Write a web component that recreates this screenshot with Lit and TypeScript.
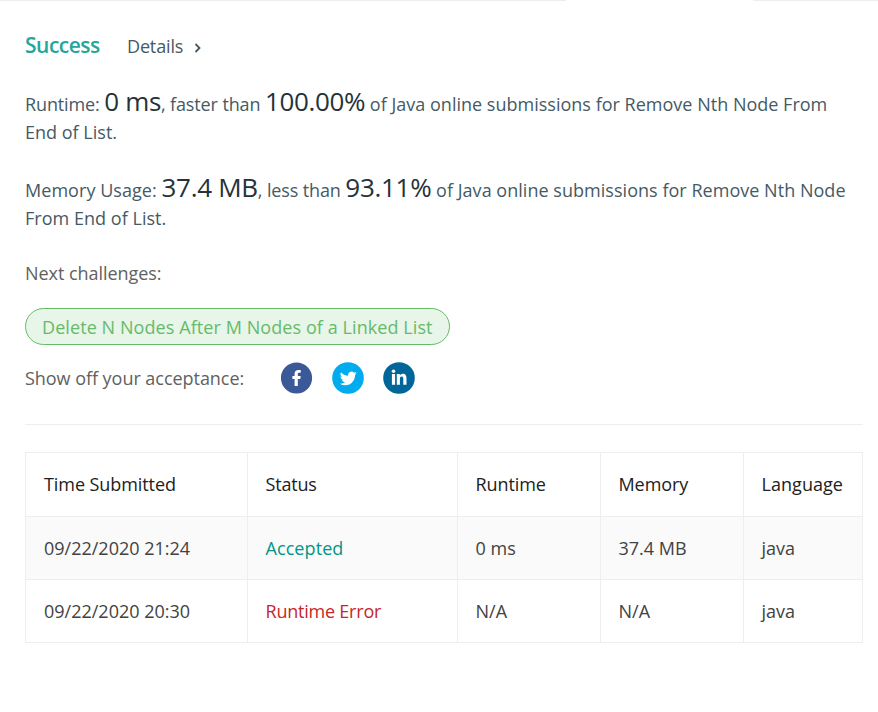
import { LitElement, html, css } from "lit";
import { customElement } from "lit/decorators.js";

interface Submission {
  time: string;
  status: string;
  ok: boolean;
  runtime: string;
  memory: string;
  language: string;
}

const submissions: Submission[] = [
  { time: "09/22/2020 21:24", status: "Accepted", ok: true, runtime: "0 ms", memory: "37.4 MB", language: "java" },
  { time: "09/22/2020 20:30", status: "Runtime Error", ok: false, runtime: "N/A", memory: "N/A", language: "java" },
];

@customElement("app-root")
class AppRoot extends LitElement {
  static styles = css`
    :host {
      display: block;
      box-sizing: border-box;
      height: 712px;
      overflow: hidden;
      background: #fff;
      color: #455a64;
      font: 18px/28px "Open Sans", "Noto Sans", sans-serif;
      white-space: nowrap;
    }
    .tabs { display: flex; justify-content: space-between; height: 1px; }
    .tabs i { background: #eee; }
    .left { width: 566px; }
    .right { width: 125px; }
    .page { padding: 30px 15px 0 25px; }
    .head { display: flex; align-items: baseline; height: 28px; }
    .success { color: #26a69a; font-size: 21px; font-weight: 600; letter-spacing: -0.5px; width: 102px; }
    .details { letter-spacing: -0.15px; }
    .chevron { margin-left: 11px; width: 8px; height: 10px; }
    p { margin: 31px 0 0; height: 56px; }
    p + p { margin-top: 30px; }
    b { font-weight: 400; font-size: 26px; line-height: 0; color: #263238; letter-spacing: -0.35px; }
    .memory b { letter-spacing: -0.3px; }
    .t1 { letter-spacing: -0.12px; }
    .memory .t1:first-child { letter-spacing: 0.05px; }
    .t2 { letter-spacing: 0.01px; }
    .memory .t2 { letter-spacing: 0.03px; }
    .next { margin-top: 27px; color: #616161; letter-spacing: -0.05px; }
    .pill {
      box-sizing: border-box;
      width: 425px;
      height: 37px;
      margin: 21px 0 17px;
      padding-left: 16px;
      border: 1px solid #66bb6a;
      border-radius: 19px;
      background: #e8f5e9;
      color: #66bb6a;
      line-height: 36px;
      letter-spacing: 0.08px;
    }
    .share { display: flex; align-items: center; height: 32px; color: #616161; letter-spacing: -0.04px; }
    .share span { width: 256px; }
    .share svg { width: 32px; height: 32px; margin-right: 19px; }
    .rule { height: 1px; margin: 30px 0 27px; background: #eee; width: 838px; }
    table { border-collapse: collapse; table-layout: fixed; width: 838px; color: #424242; }
    th, td { box-sizing: border-box; border: 1px solid #eee; padding: 0 0 0 17.5px; text-align: left; font-weight: 400; height: 63px; }
    th { height: 64px; padding-bottom: 2px; color: #212121; letter-spacing: -0.08px; }
    th:first-child, td:first-child { padding-left: 18px; }
    th:nth-child(2) { letter-spacing: -0.2px; }
    th:last-child { letter-spacing: 0.05px; }
    .shade { background: #fafafa; }
    .good { color: #009688; letter-spacing: 0.08px; }
    .bad { color: #c62828; letter-spacing: -0.22px; }
    .c1 { width: 222px; } .c2 { width: 210px; } .c3 { width: 143px; } .c4 { width: 143px; } .c5 { width: 119px; }
  `;

  render() {
    return html`
      <div class="tabs"><i class="left"></i><i class="right"></i></div>
      <div class="page">
        <div class="head">
          <span class="success">Success</span>
          <span class="details">Details</span>
          <svg class="chevron" viewBox="0 0 8 10"><path d="M1.5 1l4 4-4 4" fill="none" stroke="#455a64" stroke-width="1.8" /></svg>
        </div>
        <p><span class="t1">Runtime: </span><b>0 ms</b><span class="t1">, faster than </span><b>100.00%</b><span class="t2"> of Java online submissions for Remove Nth Node From<br />End of List.</span></p>
        <p class="memory"><span class="t1">Memory Usage: </span><b>37.4 MB</b><span class="t1">, less than </span><b>93.11%</b><span class="t2"> of Java online submissions for Remove Nth Node<br />From End of List.</span></p>
        <div class="next">Next challenges:</div>
        <div class="pill">Delete N Nodes After M Nodes of a Linked List</div>
        <div class="share">
          <span>Show off your acceptance:</span>
          <svg viewBox="0 0 32 32">
            <circle cx="15.5" cy="16" r="15.6" fill="#3b5998" />
            <path fill="#fff" d="M13.6 24v-7.1h-2.2v-3h2.2v-2.200c0-2.500 1.600-3.700 3.900-3.700 1.100 0 1.900.1 2.200.1v2.600h-1.500c-1.200 0-1.400.6-1.400 1.400v1.800h2.900l-.4 3h-2.500v7.100z" />
          </svg>
          <svg viewBox="0 0 32 32">
            <circle cx="16" cy="16" r="15.8" fill="#00aced" />
            <path fill="#fff" transform="translate(7.9 8) scale(.7)" d="M23.95 4.57a10 10 0 0 1-2.82.77 4.96 4.96 0 0 0 2.16-2.72c-.95.55-2 .95-3.13 1.18a4.92 4.92 0 0 0-8.38 4.48C7.69 8.09 4.07 6.13 1.64 3.16a4.92 4.92 0 0 0 1.52 6.57 4.9 4.9 0 0 1-2.23-.61v.06a4.92 4.92 0 0 0 3.95 4.83 5 5 0 0 1-2.21.08 4.94 4.94 0 0 0 4.6 3.42A9.87 9.87 0 0 1 0 19.54a13.99 13.99 0 0 0 7.55 2.21c9.05 0 14-7.5 14-13.98 0-.21 0-.42-.02-.63a9.94 9.94 0 0 0 2.46-2.55z" />
          </svg>
          <svg viewBox="0 0 32 32">
            <circle cx="16" cy="16" r="15.8" fill="#006699" />
            <circle cx="10.5" cy="9.200" r="1.800" fill="#fff" />
            <path fill="#fff" d="M8.900 12h3.200v10.700H8.900zM13.800 12h3v1.500c.5-.9 1.500-1.800 3-1.800 3 0 3.700 2.100 3.700 5v6h-3.200v-5.300c0-1.300-.1-2.800-1.600-2.800s-1.800 1.200-1.800 2.700v5.400h-3.100z" />
          </svg>
        </div>
        <div class="rule"></div>
        <table>
          <colgroup><col class="c1" /><col class="c2" /><col class="c3" /><col class="c4" /><col class="c5" /></colgroup>
          <tr><th>Time Submitted</th><th>Status</th><th>Runtime</th><th>Memory</th><th>Language</th></tr>
          ${submissions.map(
            (s, i) => html`<tr class=${i % 2 ? "" : "shade"}>
              <td>${s.time}</td>
              <td class=${s.ok ? "good" : "bad"}>${s.status}</td>
              <td>${s.runtime}</td>
              <td>${s.memory}</td>
              <td>${s.language}</td>
            </tr>`
          )}
        </table>
      </div>
    `;
  }
}
